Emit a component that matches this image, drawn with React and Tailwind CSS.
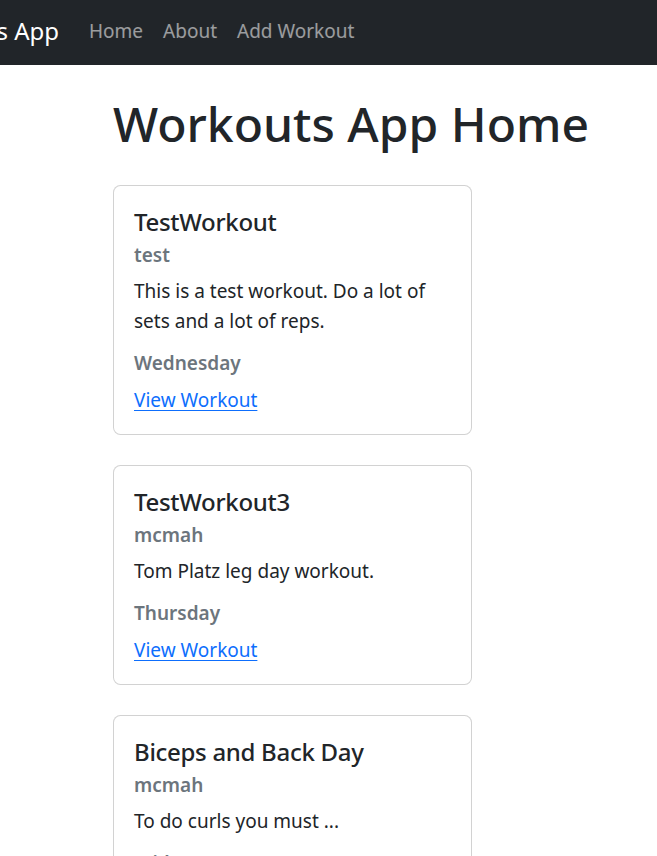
import React from "react";

const workouts = [
  {
    id: 1,
    name: "TestWorkout",
    user: "test",
    description: "This is a test workout. Do a lot of sets and a lot of reps.",
    day: "Wednesday",
  },
  {
    id: 3,
    name: "TestWorkout3",
    user: "mcmah",
    description: "Tom Platz leg day workout.",
    day: "Thursday",
  },
  {
    id: 4,
    name: "Biceps and Back Day",
    user: "mcmah",
    description: "To do curls you must ...",
    day: "Friday",
  },
];

function NavBar() {
  return (
    <nav className="bg-[#212529] h-[65px] pb-[3px] flex items-center">
      {/* brand runs off the left edge in the screenshot */}
      <div className="w-[59px] flex justify-end whitespace-nowrap">
        <a href="#" className="text-[24px] leading-[38px] text-white no-underline">Workouts App</a>
      </div>
      <ul className="flex items-center ml-[20px]">
        {["Home", "About", "Add Workout"].map((l) => (
          <li key={l}>
            <a href="#" className="block px-[10px] py-[10px] text-[19px] leading-[30px] text-white/55 whitespace-nowrap">{l}</a>
          </li>
        ))}
      </ul>
    </nav>
  );
}

function WorkoutCard({ w }) {
  return (
    <div className="w-[359px] bg-white border border-black/[.175] rounded-[7.5px] mb-[30px]">
      <div className="pt-[21px] pb-[19px] px-[20px]">
        <h5 className="text-[24px] leading-[30px] font-medium tracking-[-0.3px] text-[#212529] mb-[11px]">{w.name}</h5>
        <h6 className="text-[19px] leading-[24px] font-semibold text-[#6c757d] mt-[-5px] mb-[9px]">{w.user}</h6>
        <p className="text-[19px] leading-[30px] text-[#212529] mb-[20px]">{w.description}</p>
        <h6 className="text-[19px] leading-[24px] font-semibold text-[#6c757d] mt-[-5px] mb-[10px]">{w.day}</h6>
        <a href="#" className="text-[19px] leading-[30px] text-[#0d6efd] underline underline-offset-[3px]">View Workout</a>
      </div>
    </div>
  );
}

export default function App() {
  return (
    <div className="min-h-screen bg-white overflow-hidden font-['Segoe_UI','Noto_Sans',sans-serif]">
      <NavBar />
      <main className="pl-[113px]">
        <h1 className="text-[48px] leading-[60px] font-medium text-[#212529] pt-[29px] mb-[31px] whitespace-nowrap">Workouts App Home</h1>
        {workouts.map((w) => (
          <WorkoutCard key={w.id} w={w} />
        ))}
      </main>
    </div>
  );
}
